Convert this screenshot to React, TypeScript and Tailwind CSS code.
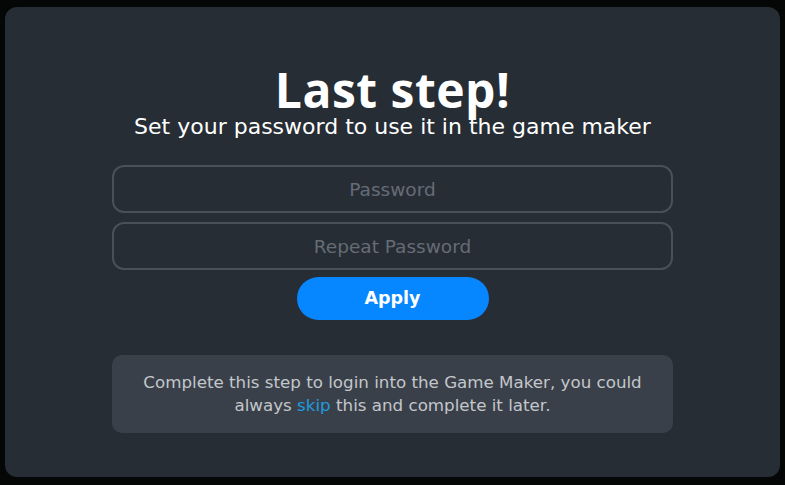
import React from "react";

const font = { fontFamily: '"DejaVu Sans", "Open Sans", sans-serif' };
const headFont = { fontFamily: '"Open Sans", "DejaVu Sans", sans-serif' };

const Field = ({ placeholder }: { placeholder: string }) => (
  <input
    type="password"
    placeholder={placeholder}
    className="h-12 w-full rounded-xl border-2 border-[#4a5059] bg-transparent text-center text-[18.5px] text-white outline-none placeholder:text-[#656c76]"
    style={font}
  />
);

export default function App() {
  return (
    <div className="h-[485px] w-[785px] bg-[#050606] pl-[5px] pt-[7px]" style={font}>
      <div className="flex h-[470px] w-[775px] flex-col items-center rounded-xl bg-[#272d35] pt-[60px]">
        <h1 className="text-[48px] font-bold leading-[46px] tracking-[0.5px] text-white" style={headFont}>
          Last step!
        </h1>
        <p className="text-[22px] leading-7 text-white">
          Set your password to use it in the game maker
        </p>

        <div className="mt-[24px] flex w-[561px] flex-col gap-[9px]">
          <Field placeholder="Password" />
          <Field placeholder="Repeat Password" />
        </div>

        <button className="mt-[7px] h-[43px] w-[192px] rounded-full bg-[#0787ff] text-[17.5px] font-bold text-white">
          Apply
        </button>

        <div className="mt-[35px] w-[561px] rounded-[10px] bg-[#3a4049] px-6 py-4 text-center text-[16.7px] leading-[23px] text-[#c3c7cc]">
          Complete this step to login into the Game Maker, you could always{" "}
          <span className="text-[#1e9be0]">skip</span> this and complete it later.
        </div>
      </div>
    </div>
  );
}
